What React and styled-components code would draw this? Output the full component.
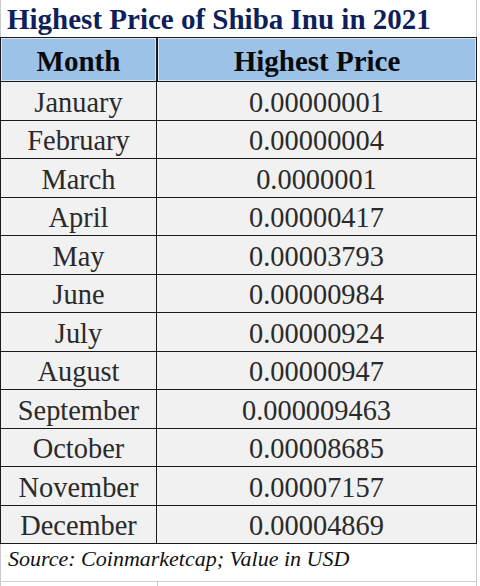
import React from 'react'
import styled, { createGlobalStyle } from 'styled-components'

const GlobalStyle = createGlobalStyle`
  html, body {
    margin: 0;
    padding: 0;
    background: #ffffff;
  }
  body {
    font-family: "Liberation Serif", "Times New Roman", serif;
  }
`

const Sheet = styled.div`
  width: 477px;
  box-sizing: border-box;
`

const Title = styled.h1`
  margin: 0;
  height: 37px;
  box-sizing: border-box;
  padding-left: 6px;
  border-left: 1px solid #c9c9c9;
  border-right: 1px solid #c9c9c9;
  font-size: 29px;
  line-height: 38px;
  font-weight: bold;
  color: #0e1f5b;
  white-space: nowrap;
`

const Row = styled.div`
  display: grid;
  grid-template-columns: 157px 1fr;
  grid-template-rows: 100%;
  height: ${(props) => props.h || 38.5}px;
  box-sizing: border-box;
`

const HeadCell = styled.div`
  display: flex;
  align-items: center;
  justify-content: center;
  background: #9cc2e7;
  border: 1px solid #1b1b1b;
  box-shadow: inset 0 0 0 1px #d8e6f3;
  font-size: 29px;
  line-height: 30px;
  font-weight: bold;
  color: #0a0a0a;
  padding-top: 2px;
`

const Cell = styled.div`
  display: flex;
  align-items: center;
  justify-content: center;
  background: #f1f1f1;
  border-bottom: 1px solid #1a1a1a;
  border-left: ${(props) => (props.first ? '1px solid #1a1a1a' : 'none')};
  border-right: 1px solid #1a1a1a;
  box-sizing: border-box;
  font-size: 28.4px;
  line-height: 28px;
  color: #2a2a2a;
  padding-top: 4px;
  overflow: hidden;
`

const Note = styled.div`
  height: 38px;
  box-sizing: border-box;
  padding: 3px 0 0 7px;
  border-left: 1px solid #c9c9c9;
  border-right: 1px solid #c9c9c9;
  border-bottom: 1px solid #cfcfcf;
  font-size: 22px;
  font-style: italic;
  color: #111;
  line-height: 24px;
`

const Stub = styled.div`
  display: grid;
  grid-template-columns: 157px 1fr;
  height: 8px;
  div {
    border-left: 1px solid #c9c9c9;
  }
  div:last-child {
    border-right: 1px solid #c9c9c9;
  }
`

const prices = [
  ['January', '0.00000001'],
  ['February', '0.00000004'],
  ['March', '0.0000001'],
  ['April', '0.00000417'],
  ['May', '0.00003793'],
  ['June', '0.00000984'],
  ['July', '0.00000924'],
  ['August', '0.00000947'],
  ['September', '0.000009463'],
  ['October', '0.00008685'],
  ['November', '0.00007157'],
  ['December', '0.00004869'],
]

export default function App() {
  return (
    <Sheet>
      <GlobalStyle />
      <Title>Highest Price of Shiba Inu in 2021</Title>
      <Row h={45}>
        <HeadCell>Month</HeadCell>
        <HeadCell>Highest Price</HeadCell>
      </Row>
      {prices.map(([month, price]) => (
        <Row key={month}>
          <Cell first>{month}</Cell>
          <Cell>{price}</Cell>
        </Row>
      ))}
      <Note>Source: Coinmarketcap; Value in USD</Note>
      <Stub>
        <div />
        <div />
      </Stub>
    </Sheet>
  )
}
